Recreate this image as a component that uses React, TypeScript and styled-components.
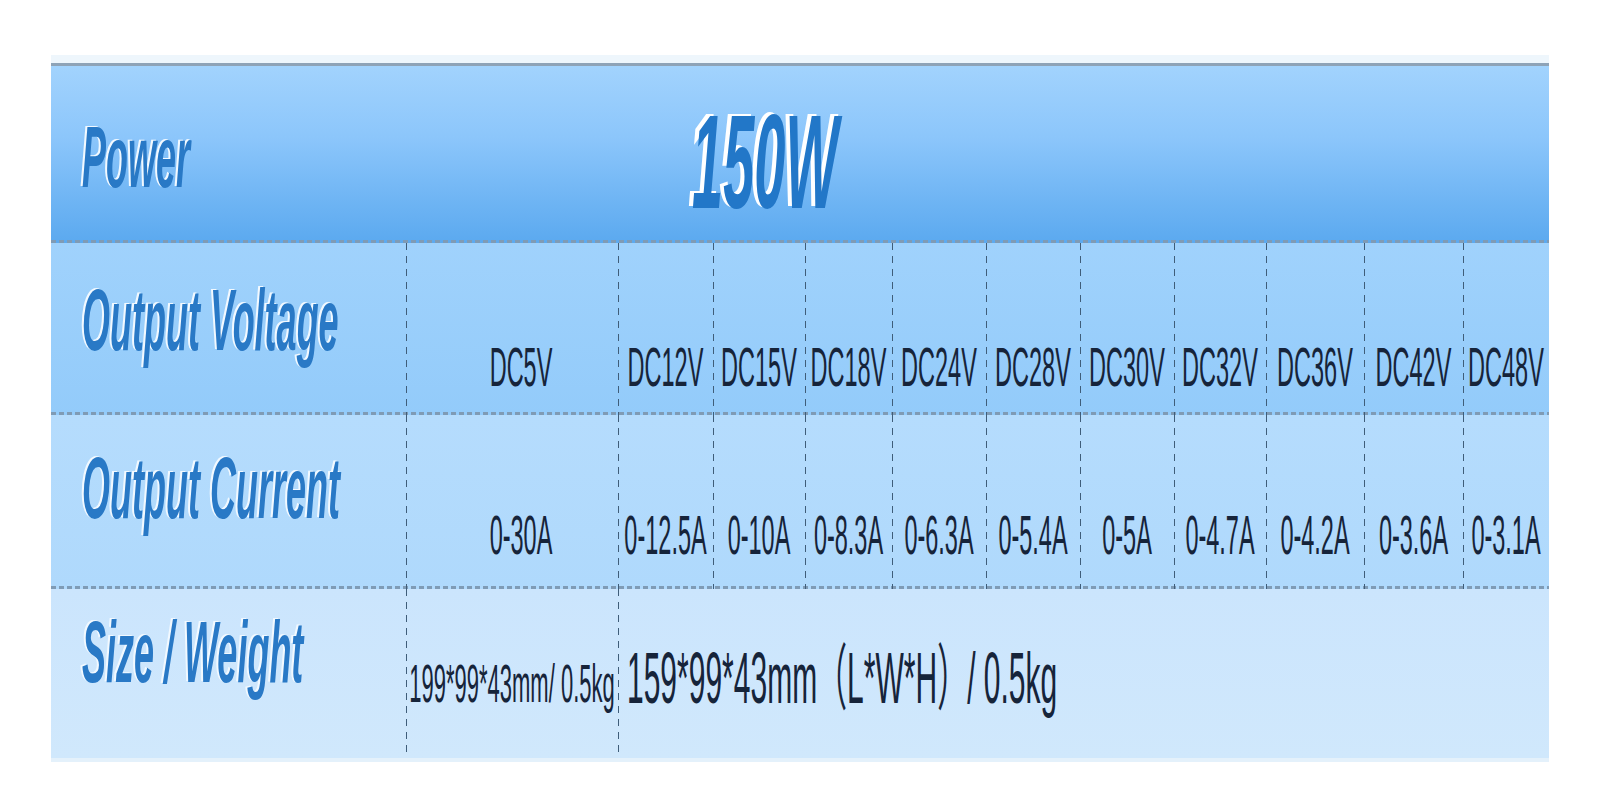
import React from 'react';
import styled, { createGlobalStyle } from 'styled-components';

const COLUMNS = '355px 212px 95px 92px 87px 94px 94px 94px 92px 98px 99px 86px';
const DOTS = 'repeating-linear-gradient(to right, #7f9bb5 0 5px, transparent 5px 8px) left bottom / 100% 3px no-repeat';

const GlobalStyle = createGlobalStyle`
  html, body {
    margin: 0;
    padding: 0;
    background: #ffffff;
    font-family: "Liberation Sans", Arial, sans-serif;
  }
`;

const Page = styled.div`
  padding: 63px 0 0 51px;
  height: 812px;
  box-sizing: border-box;
  overflow: hidden;
`;

const Table = styled.div`
  width: 1498px;
  border-top: 3px solid #8ea3b7;
  box-shadow: 0 -8px 0 #eef6fc, 0 4px 0 #e4f1fb;
`;

const HeaderRow = styled.div`
  display: flex;
  height: 177px;
  background: ${DOTS}, linear-gradient(to bottom, #a2d3fd 0%, #8cc6fb 40%, #5ba9ef 100%);
`;

const Row = styled.div<{ $height: number; $bg: string; $last?: boolean }>`
  display: grid;
  grid-template-columns: ${COLUMNS};
  height: ${p => p.$height}px;
  background: ${p => (p.$last ? p.$bg : `${DOTS}, ${p.$bg}`)};
`;

const Cell = styled.div<{ $top: number; $divider?: boolean; $span?: number; $align?: string; $pad?: number }>`
  display: flex;
  justify-content: ${p => p.$align || 'center'};
  align-items: flex-start;
  padding-top: ${p => p.$top}px;
  padding-left: ${p => p.$pad || 0}px;
  grid-column: ${p => (p.$span ? `span ${p.$span}` : 'auto')};
  white-space: nowrap;
  background: ${p =>
    p.$divider
      ? 'linear-gradient(to bottom, #3f5d79 0 7px, transparent 7px 13px) left top / 1px 13px repeat-y'
      : 'none'};
`;

const HeaderLabel = styled.div<{ $top: number }>`
  width: 355px;
  box-sizing: border-box;
  padding: ${p => p.$top}px 0 0 31px;
`;

const HeaderValue = styled.div`
  padding: 96px 0 0 286px;
`;

// stretched text, scaled from its baseline like the tall lettering in the source
const Stretch = styled.span<{ $size: number; $bold?: boolean; $italic?: boolean; $color?: string; $shadow?: string }>`
  display: inline-block;
  font-family: "Liberation Sans", Arial, "Noto Sans CJK SC", sans-serif;
  font-size: ${p => p.$size}px;
  font-weight: ${p => (p.$bold ? 700 : 400)};
  font-style: ${p => (p.$italic ? 'italic' : 'normal')};
  color: ${p => p.$color || '#16243a'};
  text-shadow: ${p => p.$shadow || 'none'};
  line-height: 1;
  transform: scaleY(2.4);
  transform-origin: 50% 84.65%;
`;

const Label: React.FC<{ children: React.ReactNode }> = ({ children }) => (
  <Stretch $size={36} $bold $italic $color="#2979c6" $shadow="-2px -0.5px 0 #f2f9ff">
    {children}
  </Stretch>
);

const voltages = ['DC5V', 'DC12V', 'DC15V', 'DC18V', 'DC24V', 'DC28V', 'DC30V', 'DC32V', 'DC36V', 'DC42V', 'DC48V'];
const currents = ['0-30A', '0-12.5A', '0-10A', '0-8.3A', '0-6.3A', '0-5.4A', '0-5A', '0-4.7A', '0-4.2A', '0-3.6A', '0-3.1A'];

const App: React.FC = () => {
  return (
    <>
      <GlobalStyle />
      <Page>
        <Table>
          <HeaderRow>
            <HeaderLabel $top={92}>
              <Label>Power</Label>
            </HeaderLabel>
            <HeaderValue>
              <Stretch $size={56} $bold $italic $color="#2277c8" $shadow="-4px -1px 0 #ffffff">
                150W
              </Stretch>
            </HeaderValue>
          </HeaderRow>

          <Row $height={172} $bg="linear-gradient(to bottom, #a0d2fc, #93cbfa)">
            <Cell $top={78} $align="flex-start" $pad={31}>
              <Label>Output Voltage</Label>
            </Cell>
            {voltages.map((v, i) => (
              <Cell key={v} $top={125} $divider $pad={i === 0 ? 18 : 0}>
                <Stretch $size={23.5}>{v}</Stretch>
              </Cell>
            ))}
          </Row>

          <Row $height={174} $bg="linear-gradient(to bottom, #b5dcfd, #afd9fc)">
            <Cell $top={74} $align="flex-start" $pad={31}>
              <Label>Output Current</Label>
            </Cell>
            {currents.map((c, i) => (
              <Cell key={c} $top={121} $divider $pad={i === 0 ? 18 : 0}>
                <Stretch $size={23.5}>{c}</Stretch>
              </Cell>
            ))}
          </Row>

          <Row $height={169} $last $bg="linear-gradient(to bottom, #cbe5fd, #d0e8fc)">
            <Cell $top={64} $align="flex-start" $pad={31}>
              <Label>Size / Weight</Label>
            </Cell>
            <Cell $top={96} $divider>
              <Stretch $size={22}>199*99*43mm/ 0.5kg</Stretch>
            </Cell>
            <Cell $top={90} $divider $span={10} $align="flex-start" $pad={9}>
              <Stretch $size={30}>159*99*43mm（L*W*H）/ 0.5kg</Stretch>
            </Cell>
          </Row>
        </Table>
      </Page>
    </>
  );
};

export default App;
